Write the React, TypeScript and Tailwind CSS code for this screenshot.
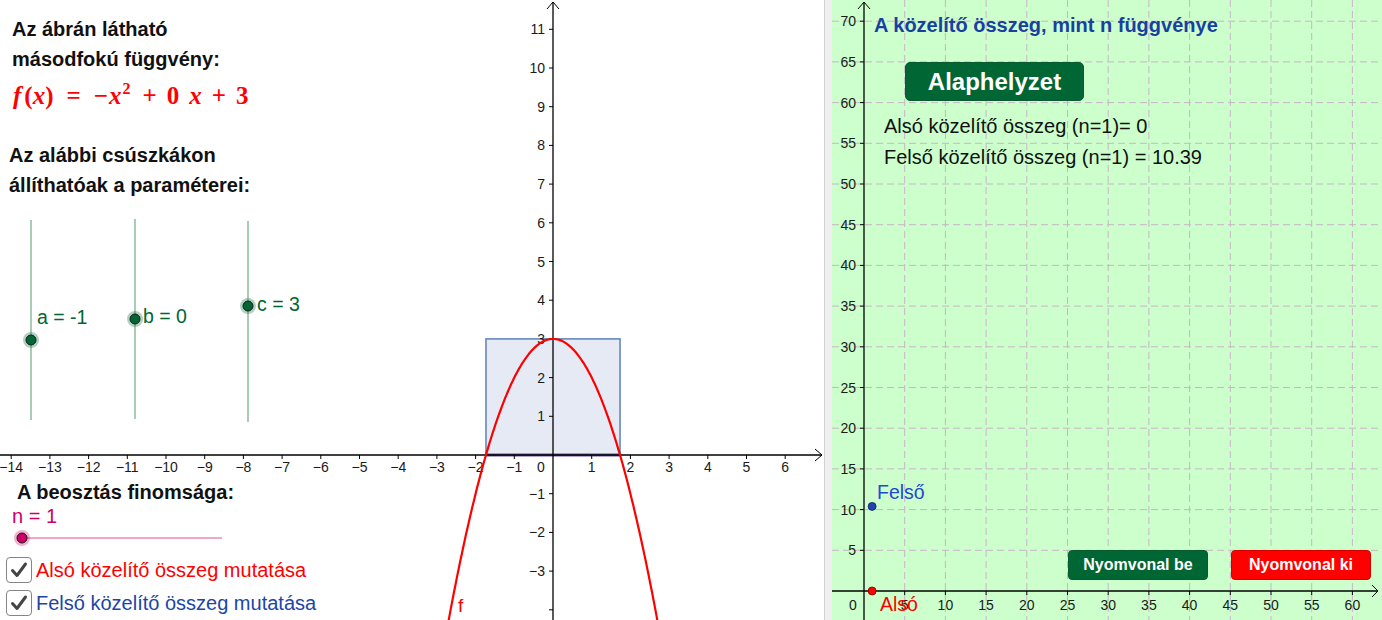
import React from "react";

// left graph: unit and origin in px
const U = 38.7;
const OX = 553;
const OY = 455;
const sx = (x: number) => OX + U * x;
const sy = (y: number) => OY - U * y;

// right graph: 5 units per grid step
const G = 40.7;
const RX = 32;
const RY = 591;

const minus = (n: number) => (n < 0 ? `\u2212${-n}` : `${n}`);

function parabolaPath() {
  const pts: string[] = [];
  for (let x = -2.8; x <= 2.8001; x += 0.04) {
    pts.push(`${sx(x).toFixed(1)},${sy(-x * x + 3).toFixed(1)}`);
  }
  return "M" + pts.join(" L");
}

function Slider({ x, top, bottom, py }: { x: number; top: number; bottom: number; py: number }) {
  return (
    <g>
      <line x1={x} y1={top} x2={x} y2={bottom} stroke="#a9cdb4" strokeWidth={2} />
      <circle cx={x} cy={py} r={8} fill="#006633" fillOpacity={0.3} />
      <circle cx={x} cy={py} r={5} fill="#006633" stroke="#1a1a1a" strokeWidth={1} />
    </g>
  );
}

function LeftGraph() {
  const xs = Array.from({ length: 21 }, (_, i) => i - 14);
  const ys = Array.from({ length: 16 }, (_, i) => i - 4);
  const a = Math.sqrt(3);
  return (
    <svg className="absolute inset-0" width={824} height={620} fontFamily="'Liberation Sans', Arial, sans-serif">
      {/* upper sum rectangle */}
      <rect x={sx(-a)} y={sy(3)} width={sx(a) - sx(-a)} height={sy(0) - sy(3)} fill="#e6eaf5" stroke="#5d80b8" strokeWidth={1.5} />
      <line x1={sx(-a)} y1={OY} x2={sx(a)} y2={OY} stroke="#6650a0" strokeWidth={3} />

      {/* axes */}
      <line x1={0} y1={OY} x2={822} y2={OY} stroke="#000" strokeWidth={1.3} />
      <path d="M815,449 L822,455 L815,461" fill="none" stroke="#000" strokeWidth={1} />
      <line x1={OX} y1={620} x2={OX} y2={2} stroke="#000" strokeWidth={1.3} />
      <path d="M547,9 L553,2 L559,9" fill="none" stroke="#000" strokeWidth={1} />

      {xs.map((k) =>
        k === 0 ? null : (
          <g key={`x${k}`}>
            <line x1={sx(k)} y1={OY} x2={sx(k)} y2={OY + 4} stroke="#000" strokeWidth={1} />
            <text x={sx(k)} y={472} fontSize={14} textAnchor="middle" fill="#1a1a1a">
              {minus(k)}
            </text>
          </g>
        )
      )}
      <text x={541} y={472} fontSize={14} textAnchor="middle" fill="#1a1a1a">
        0
      </text>
      {ys.map((k) =>
        k === 0 ? null : (
          <g key={`y${k}`}>
            <line x1={OX - 4} y1={sy(k)} x2={OX} y2={sy(k)} stroke="#000" strokeWidth={1} />
            {k !== -4 && (
              <text x={545} y={sy(k) + 5} fontSize={14} textAnchor="end" fill="#1a1a1a">
                {minus(k)}
              </text>
            )}
          </g>
        )
      )}

      <path d={parabolaPath()} fill="none" stroke="#ff0000" strokeWidth={2.2} />
      <text x={458} y={612} fontSize={19} fill="#ff0000">
        f
      </text>

      {/* parameter sliders */}
      <Slider x={31} top={220} bottom={420} py={340} />
      <Slider x={135} top={219} bottom={419} py={319} />
      <Slider x={248} top={221} bottom={422} py={306} />
      <text x={37} y={324} fontSize={19.5} fill="#006633">a = -1</text>
      <text x={143} y={323} fontSize={19.5} fill="#006633">b = 0</text>
      <text x={257} y={311} fontSize={19.5} fill="#006633">c = 3</text>

      {/* n slider */}
      <line x1={22} y1={538} x2={222} y2={538} stroke="#f4a6c9" strokeWidth={2} />
      <circle cx={22} cy={538} r={8} fill="#cc0066" fillOpacity={0.3} />
      <circle cx={22} cy={538} r={5} fill="#cc0066" stroke="#1a1a1a" strokeWidth={1} />
    </svg>
  );
}

function RightGraph() {
  const vk = Array.from({ length: 13 }, (_, i) => i + 1);
  const hk = Array.from({ length: 14 }, (_, i) => i + 1);
  return (
    <svg className="absolute inset-0" width={550} height={620} fontFamily="'Liberation Sans', Arial, sans-serif">
      {vk.map((k) => (
        <line key={`gv${k}`} x1={RX + k * G} y1={0} x2={RX + k * G} y2={620} stroke="#c8b6c8" strokeWidth={1} strokeDasharray="7 4" />
      ))}
      {hk.map((k) => (
        <line key={`gh${k}`} x1={0} y1={RY - k * G} x2={550} y2={RY - k * G} stroke="#c8b6c8" strokeWidth={1} strokeDasharray="7 4" />
      ))}

      <line x1={0} y1={RY} x2={546} y2={RY} stroke="#000" strokeWidth={1.3} />
      <path d="M540,585 L546,591 L540,597" fill="none" stroke="#000" strokeWidth={1} />
      <line x1={RX} y1={620} x2={RX} y2={2} stroke="#000" strokeWidth={1.3} />
      <path d="M26,9 L32,2 L38,9" fill="none" stroke="#000" strokeWidth={1} />

      {hk.map((k) => (
        <g key={`yl${k}`}>
          <line x1={RX - 4} y1={RY - k * G} x2={RX} y2={RY - k * G} stroke="#000" strokeWidth={1} />
          <text x={24} y={RY - k * G + 5} fontSize={14} textAnchor="end" fill="#1a1a1a">
            {k * 5}
          </text>
        </g>
      ))}
      {vk.slice(0, 12).map((k) => (
        <g key={`xl${k}`}>
          <line x1={RX + k * G} y1={RY} x2={RX + k * G} y2={RY + 4} stroke="#000" strokeWidth={1} />
          <text x={RX + k * G} y={610} fontSize={14} textAnchor="middle" fill="#1a1a1a">
            {k * 5}
          </text>
        </g>
      ))}
      <text x={21} y={610} fontSize={14} textAnchor="middle" fill="#1a1a1a">
        0
      </text>

      <circle cx={RX + 8.14} cy={RY - 10.39 * 8.14} r={4} fill="#1f43b0" stroke="#102060" strokeWidth={0.8} />
      <text x={45} y={499} fontSize={19.5} fill="#2449d0">Felső</text>
      <circle cx={RX + 8.14} cy={RY} r={4} fill="#ff0000" stroke="#700" strokeWidth={0.8} />
      <text x={48} y={611} fontSize={19.5} fill="#ff0000">Alsó</text>
    </svg>
  );
}

function CheckRow({ label, color }: { label: string; color: string }) {
  return (
    <div className="flex h-[26px] items-center gap-[4px]">
      <span className="flex h-[26px] w-[26px] items-center justify-center rounded-[4px] border-[1.5px] border-[#858585] bg-white">
        <svg width="20" height="20" viewBox="0 0 20 20">
          <path d="M3.5 10.5 L8 15.5 L16.5 4" fill="none" stroke="#444" strokeWidth={3} strokeLinecap="round" strokeLinejoin="round" />
        </svg>
      </span>
      <span className={`text-[20px] leading-none ${color}`}>{label}</span>
    </div>
  );
}

export default function App() {
  return (
    <div className="flex h-[620px] w-[1382px] overflow-hidden bg-white font-['Liberation_Sans',Arial,sans-serif]">
      <section className="relative h-full w-[824px] shrink-0 bg-white">
        <LeftGraph />
        <div className="absolute left-[12px] top-[14px] text-[20px] font-bold leading-[30px] text-[#111]">
          <p>Az ábrán látható</p>
          <p>másodfokú függvény:</p>
        </div>
        <div className="absolute left-[13px] top-[83px] flex items-baseline font-['Liberation_Serif',serif] text-[25px] font-bold leading-none text-[#ff0000]">
          <i>f</i>
          <span className="ml-[3px]">(</span>
          <i>x</i>
          <span>)</span>
          <span className="mx-[13px]">=</span>
          <span>−</span>
          <i className="ml-[1px]">x</i>
          <span className="relative -top-[10px] ml-[1px] text-[16px]">2</span>
          <span className="ml-[12px]">+</span>
          <span className="ml-[10px]">0</span>
          <i className="ml-[10px]">x</i>
          <span className="ml-[10px]">+</span>
          <span className="ml-[10px]">3</span>
        </div>
        <div className="absolute left-[9px] top-[140px] text-[20px] font-bold leading-[30px] text-[#111]">
          <p>Az alábbi csúszkákon</p>
          <p>állíthatóak a paraméterei:</p>
        </div>
        <p className="absolute left-[17px] top-[482px] text-[20px] font-bold leading-none text-[#111]">A beosztás finomsága:</p>
        <p className="absolute left-[12px] top-[506px] text-[20px] leading-none text-[#cc0066]">n = 1</p>
        <div className="absolute left-[6px] top-[557px] flex flex-col gap-[7px]">
          <CheckRow label="Alsó közelítő összeg mutatása" color="text-[#ff0000]" />
          <CheckRow label="Felső közelítő összeg mutatása" color="text-[#1c45a6]" />
        </div>
      </section>

      <div className="h-full w-[8px] shrink-0 border-l border-[#d2d2d2] bg-[#efefef]" />

      <section className="relative h-full flex-1 bg-[#ccffcc]">
        <RightGraph />
        <h2 className="absolute left-[42px] top-[15px] text-[20px] font-bold leading-none text-[#1a3fa0]">
          A közelítő összeg, mint n függvénye
        </h2>
        <button className="absolute left-[73px] top-[62px] flex h-[39px] w-[179px] items-center justify-center rounded-[5px] border border-[#0b5a30] bg-[#006633] text-[24px] font-bold text-white">
          Alaphelyzet
        </button>
        <div className="absolute left-[52px] top-[116px] flex flex-col gap-[11px] text-[20px] leading-none text-[#111]">
          <p>Alsó közelítő összeg (n=1)= 0</p>
          <p>Felső közelítő összeg (n=1) = 10.39</p>
        </div>
        <div className="absolute left-[236px] top-[550px] flex gap-[23px]">
          <button className="flex h-[30px] w-[140px] items-center justify-center rounded-[4px] border border-[#0b5a30] bg-[#006633] text-[16px] font-bold text-white">
            Nyomvonal be
          </button>
          <button className="flex h-[30px] w-[140px] items-center justify-center rounded-[4px] border border-[#d40000] bg-[#ff0000] text-[16px] font-bold text-white">
            Nyomvonal ki
          </button>
        </div>
      </section>
    </div>
  );
}
